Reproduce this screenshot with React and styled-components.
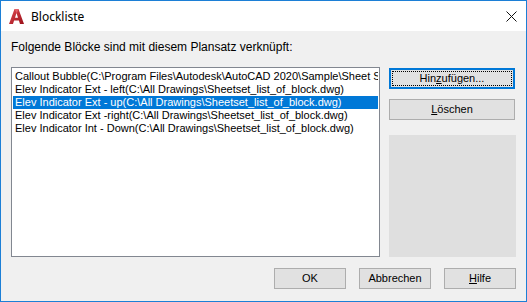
import styled, { createGlobalStyle } from 'styled-components';

const GlobalStyle = createGlobalStyle`
  html, body {
    margin: 0;
    padding: 0;
    background: #ffffff;
  }
  body {
    font-family: 'Liberation Sans', Arial, sans-serif;
    font-size: 11px;
    color: #000;
  }
`;

const blocks = [
  'Callout Bubble(C:\\Program Files\\Autodesk\\AutoCAD 2020\\Sample\\Sheet Sets\\Architectural\\Callout.dwg)',
  'Elev Indicator Ext - left(C:\\All Drawings\\Sheetset_list_of_block.dwg)',
  'Elev Indicator Ext - up(C:\\All Drawings\\Sheetset_list_of_block.dwg)',
  'Elev Indicator Ext -right(C:\\All Drawings\\Sheetset_list_of_block.dwg)',
  'Elev Indicator Int - Down(C:\\All Drawings\\Sheetset_list_of_block.dwg)',
];

const AppLogo = () => (
  <svg width='17' height='17' viewBox='0 0 17 17'>
    <defs>
      <linearGradient id='acadRed' x1='0' y1='0' x2='1' y2='1'>
        <stop offset='0' stopColor='#e04850' />
        <stop offset='1' stopColor='#9a1019' />
      </linearGradient>
    </defs>
    <path
      d='M1 16 L6.5 1 L10.5 1 L16 16 L12 16 L10.9 12.6 L6.1 12.6 L5 16 Z M7 9.8 L10 9.8 L8.5 5 Z'
      fill='url(#acadRed)'
      fillRule='evenodd'
    />
    <path d='M6.5 1 L10.5 1 L9.2 4.6 L8.5 5 Z' fill='#f27a80' opacity='0.6' />
  </svg>
);

const CloseIcon = () => (
  <svg width='11' height='11' viewBox='0 0 11 11'>
    <path d='M0.5 0.5 L10.5 10.5 M10.5 0.5 L0.5 10.5' stroke='#111' strokeWidth='1' />
  </svg>
);

const App = () => {
  return (
    <>
      <GlobalStyle />
      <Window>
        <TitleBar>
          <LogoSlot>
            <AppLogo />
          </LogoSlot>
          <Title>Blockliste</Title>
          <CloseButton>
            <CloseIcon />
          </CloseButton>
        </TitleBar>
        <Body>
          <Caption>Folgende Blöcke sind mit diesem Plansatz verknüpft:</Caption>
          <MainRow>
            <ListBox>
              {blocks.map((b, i) => (
                <ListItem key={b} $selected={i === 2}>
                  {b}
                </ListItem>
              ))}
            </ListBox>
            <SideColumn>
              <DialogButton $wide $focused>
                <FocusRing>
                  <span>
                    Hin<u>z</u>ufügen...
                  </span>
                </FocusRing>
              </DialogButton>
              <DialogButton $wide>
                <span>
                  <u>L</u>öschen
                </span>
              </DialogButton>
              <Preview />
            </SideColumn>
          </MainRow>
          <Footer>
            <DialogButton>OK</DialogButton>
            <DialogButton>Abbrechen</DialogButton>
            <DialogButton>
              <span>
                <u>H</u>ilfe
              </span>
            </DialogButton>
          </Footer>
        </Body>
      </Window>
    </>
  );
};

const Window = styled.div`
  box-sizing: border-box;
  width: 527px;
  height: 302px;
  border: 1px solid #1c7fd6;
  display: flex;
  flex-direction: column;
  background: #f0f0f0;
  overflow: hidden;
`;

const TitleBar = styled.div`
  height: 30px;
  flex: none;
  background: #ffffff;
  display: flex;
  align-items: center;
  padding: 0 9px 0 7px;
`;

const LogoSlot = styled.div`
  width: 17px;
  height: 17px;
  display: flex;
  margin-right: 6px;
`;

const Title = styled.div`
  flex: 1;
  font-family: 'Noto Sans', 'Open Sans', sans-serif;
  font-size: 12px;
  color: #000;
  padding-top: 1px;
`;

const CloseButton = styled.div`
  width: 11px;
  height: 11px;
  display: flex;
  margin-top: 1px;
`;

const Body = styled.div`
  flex: 1;
  display: flex;
  flex-direction: column;
  padding: 10px 9px 0 10px;
`;

const Caption = styled.div`
  font-size: 12px;
  line-height: 13px;
  height: 13px;
  color: #000;
`;

const MainRow = styled.div`
  display: flex;
  gap: 9px;
  margin-top: 13px;
`;

const ListBox = styled.div`
  box-sizing: border-box;
  width: 369px;
  height: 190px;
  background: #ffffff;
  border: 1px solid #828790;
  padding: 2px 1px;
  overflow: hidden;
`;

const ListItem = styled.div`
  height: 13px;
  line-height: 13px;
  padding-left: 2px;
  white-space: nowrap;
  overflow: hidden;
  background: ${(p) => (p.$selected ? '#0078d7' : 'transparent')};
  color: ${(p) => (p.$selected ? '#ffffff' : '#000000')};
`;

const SideColumn = styled.div`
  width: 127px;
  display: flex;
  flex-direction: column;
  padding-top: 1px;
  gap: 10px;
`;

const DialogButton = styled.div`
  box-sizing: border-box;
  width: ${(p) => (p.$wide ? '126px' : '72px')};
  height: 21px;
  display: flex;
  align-items: center;
  justify-content: center;
  background: #e1e1e1;
  border: ${(p) => (p.$focused ? '2px solid #0078d7' : '1px solid #adadad')};
  padding: ${(p) => (p.$focused ? '1px' : '0')};
  color: #000;
  line-height: 13px;
`;

const FocusRing = styled.div`
  box-sizing: border-box;
  width: 100%;
  height: 100%;
  border: 1px dotted #000;
  display: flex;
  align-items: center;
  justify-content: center;
`;

const Preview = styled.div`
  margin-top: 5px;
  height: 122px;
  background: #dfdfdf;
`;

const Footer = styled.div`
  display: flex;
  justify-content: flex-end;
  gap: 13px;
  margin-top: 11px;
  padding-right: 1px;
`;

export default App;
